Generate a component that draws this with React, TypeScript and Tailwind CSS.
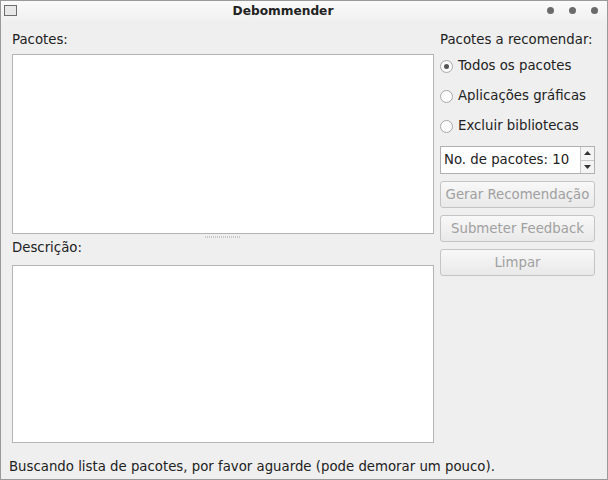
import React from "react";

const font = { fontFamily: '"DejaVu Sans", Verdana, sans-serif' };

function Radio({ label, checked }: { label: string; checked?: boolean }) {
  return (
    <div className="flex h-[30px] items-center gap-[5px]">
      <span className="flex h-[13px] w-[13px] items-center justify-center rounded-full border border-[#a8a8a8] bg-[#fbfbfb]">
        {checked && <span className="h-[5px] w-[5px] rounded-full bg-[#555]" />}
      </span>
      <span className="text-[13.3px] text-[#222]">{label}</span>
    </div>
  );
}

function Button({ label }: { label: string }) {
  return (
    <div className="flex h-[27px] items-center justify-center rounded-[3px] border border-[#c4c4c4] bg-gradient-to-b from-[#f8f8f8] to-[#e9e9e9] text-[13.3px] text-[#a0a0a0]">
      {label}
    </div>
  );
}

export default function App() {
  return (
    <div className="h-[480px] w-[608px] overflow-hidden border border-[#9a9a9a] bg-[#efefef]" style={font}>
      <div className="relative flex h-[20px] items-center justify-center bg-gradient-to-b from-[#fafafa] to-[#f0f0f0]">
        <span className="absolute left-[3px] top-[4px] h-[11px] w-[13px] border border-[#6e6e6e] bg-[#e8e8e8]" />
        <span className="ml-[-42px] text-[12.2px] font-bold text-[#222]">Debommender</span>
        <div className="absolute right-[9px] top-[6px] flex gap-[15px]">
          <span className="h-[7px] w-[7px] rounded-full bg-[#6a6a6a]" />
          <span className="h-[7px] w-[7px] rounded-full bg-[#6a6a6a]" />
          <span className="h-[7px] w-[7px] rounded-full bg-[#6a6a6a]" />
        </div>
      </div>
      <div className="flex h-[438px] gap-[6px] pl-[11px] pr-[12px] pt-[9px]">
        <div className="flex w-[422px] flex-col">
          <div className="h-[24px] text-[13.3px] leading-[20px] text-[#222]">Pacotes:</div>
          <div className="h-[180px] border border-[#b4b4b4] bg-white" />
          <div className="flex h-[6px] items-center justify-center">
            <span className="h-[2px] w-[36px] bg-[repeating-linear-gradient(90deg,#c8c8c8_0px,#c8c8c8_1px,transparent_1px,transparent_2px)]" />
          </div>
          <div className="h-[25px] text-[13.3px] leading-[16px] text-[#222]">Descrição:</div>
          <div className="h-[178px] border border-[#b4b4b4] bg-white" />
        </div>
        <div className="flex flex-1 flex-col">
          <div className="h-[21px] text-[13.3px] leading-[20px] text-[#222]">Pacotes a recomendar:</div>
          <Radio label="Todos os pacotes" checked />
          <Radio label="Aplicações gráficas" />
          <Radio label="Excluir bibliotecas" />
          <div className="mt-[5px] flex h-[28px] border border-[#b0b0b0] bg-white">
            <div className="flex flex-1 items-center pl-[3px] text-[13.3px] text-[#222]">No. de pacotes: 10</div>
            <div className="flex w-[14px] flex-col border-l border-[#c8c8c8] bg-[#f4f4f4]">
              <div className="flex flex-1 items-center justify-center border-b border-[#c8c8c8]">
                <svg width="7" height="4" viewBox="0 0 7 4"><path d="M0 4 L3.5 0 L7 4Z" fill="#333" /></svg>
              </div>
              <div className="flex flex-1 items-center justify-center">
                <svg width="7" height="4" viewBox="0 0 7 4"><path d="M0 0 L3.5 4 L7 0Z" fill="#333" /></svg>
              </div>
            </div>
          </div>
          <div className="mt-[7px] flex flex-col gap-[7px]">
            <Button label="Gerar Recomendação" />
            <Button label="Submeter Feedback" />
            <Button label="Limpar" />
          </div>
        </div>
      </div>
      <div className="relative h-[20px] pl-[8px] text-[13.3px] leading-[16px] text-[#222]">
        Buscando lista de pacotes, por favor aguarde (pode demorar um pouco).
      </div>
    </div>
  );
}
